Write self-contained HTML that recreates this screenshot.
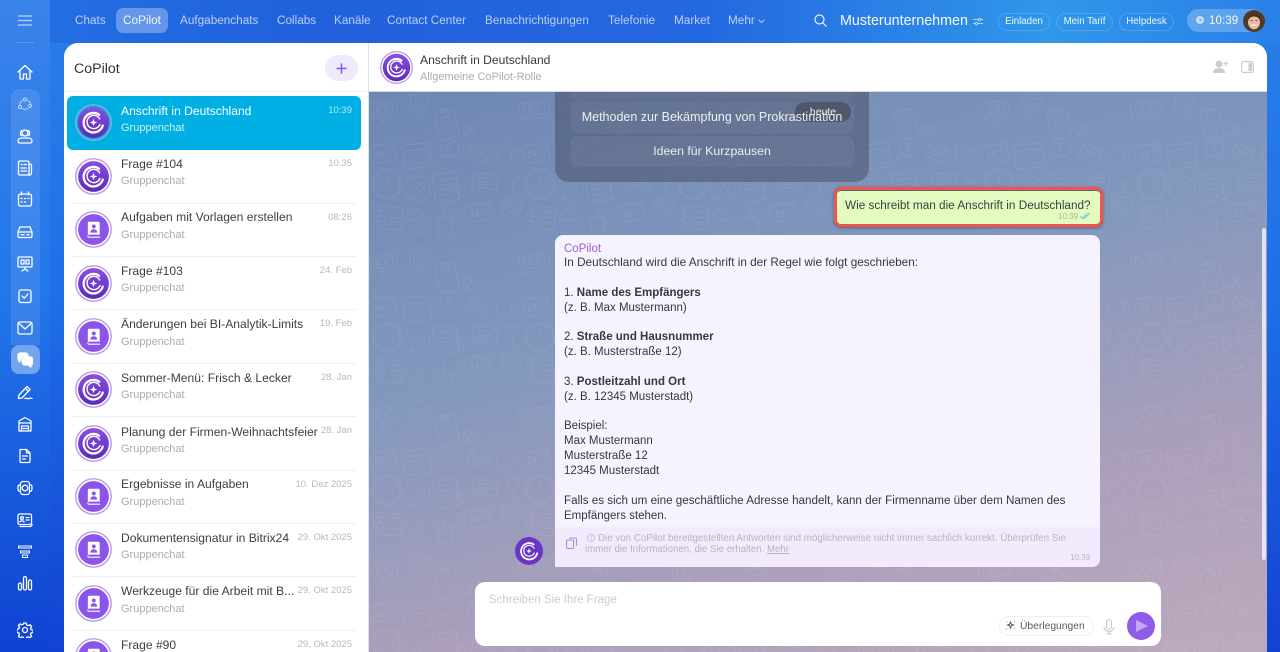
<!DOCTYPE html>
<html lang="de"><head><meta charset="utf-8"><title>CoPilot</title>
<style>
*{box-sizing:border-box;margin:0;padding:0}
html,body{width:1280px;height:652px;overflow:hidden}
body{position:relative;font-family:"Liberation Sans",sans-serif;background:linear-gradient(180deg,#2a7fe8 0%,#1f6fe8 45%,#1242d2 100%)}
.topglow{position:absolute;left:0;top:0;width:1280px;height:43px;background:linear-gradient(90deg,#2370e4 0%,#2261dc 25%,#2468e0 55%,#3097ea 82%,#2a7fe8 100%)}
.side{position:absolute;left:0;top:0;width:50px;height:652px;background:linear-gradient(180deg,#3a83ea 0%,#2277ea 45%,#0f42d2 100%)}
.t{position:absolute;white-space:nowrap}
.nav{top:14px;font-size:11.75px;line-height:14px;color:rgba(255,255,255,.68)}
.pill{position:absolute;top:13px;height:18px;border:1px solid rgba(255,255,255,.16);border-radius:9px;font-size:9.7px;line-height:16px;color:rgba(255,255,255,.92);text-align:center}
.list{position:absolute;left:64px;top:43px;width:305px;height:609px;background:#fff;border-radius:14px 0 0 0;overflow:hidden;border-right:1px solid #dfe2e8}
.hdr{position:absolute;left:369px;top:43px;width:898px;height:49px;background:#fff;border-radius:0 14px 0 0;border-bottom:1px solid #d6d9e2}
.sel{position:absolute;left:3px;top:53px;width:294px;height:54px;background:#00afe4;border-radius:6px}
.sep{position:absolute;left:7px;width:286px;height:1px;background:#eff0f3}
.ti{left:57px;font-size:12.1px;line-height:15px;color:#3b3f45}
.su{left:57px;font-size:11px;line-height:14px;color:#a9adb4}
.tm{right:16px;font-size:9.5px;line-height:12px;color:#b4b8be}
.l .tm{position:absolute}
.chat{position:absolute;left:369px;top:92px;width:898px;height:560px;background:linear-gradient(165deg,#6e87b3 0%,#8398bd 40%,#ab9fbb 72%,#bcaabc 100%);overflow:hidden}
.ln{position:absolute;left:564px;font-size:11.5px;line-height:15px;color:#35383e;white-space:nowrap}
.ln b{font-weight:700}
.av{position:absolute}
.si{position:absolute;left:17px;width:16px;height:16px;fill:none;stroke:#fff;stroke-width:1.3;stroke-linecap:round;stroke-linejoin:round}
</style></head><body>
<div class="topglow"></div>
<div class="side"></div>
<svg width="0" height="0" style="position:absolute"><defs>
<linearGradient id="cg" x1="0" y1="0" x2="0" y2="1"><stop offset="0" stop-color="#8a4fe0"/><stop offset="1" stop-color="#5d2ab8"/></linearGradient>
<symbol id="cpi" viewBox="0 0 36 36">
<circle cx="18" cy="18" r="15" fill="url(#cg)"/>
<path d="M23.500 10.500A9.500 9.500 0 1 0 27 21" fill="none" stroke="#fff" stroke-width="2.200" stroke-linecap="round"/>
<path d="M24 14.500A6.500 6.500 0 1 0 24.200 20" fill="none" stroke="#fff" stroke-width="1.400" stroke-linecap="round"/>
<path d="M18 14.300l1 2.700 2.700 1-2.700 1-1 2.700-1-2.700-2.700-1 2.700-1z" fill="#fff"/>
</symbol>
<symbol id="cp" viewBox="0 0 36 36">
<circle cx="18" cy="18" r="17.2" fill="#fff" stroke="#b79be8" stroke-width="1.4"/>
<use href="#cpi" width="36" height="36"/>
</symbol>
<symbol id="bk" viewBox="0 0 36 36">
<circle cx="18" cy="18" r="17.2" fill="#fff" stroke="#b79be8" stroke-width="1.4"/>
<circle cx="18" cy="18" r="15" fill="#8a55e8"/>
<path d="M12.500 11.500a1 1 0 0 1 1-1h9.500a1 1 0 0 1 1 1v11.500H14a1.500 1.500 0 0 0-1.500 1.200z" fill="#fff"/>
<path d="M12.500 24.500a1.200 1.200 0 0 0 1.200 1H24" fill="none" stroke="#fff" stroke-width="1.100" stroke-linecap="round"/>
<circle cx="18.300" cy="15" r="1.900" fill="#8a55e8"/><path d="M15 21c0-2.200 1.400-3.200 3.300-3.200s3.300 1 3.300 3.200z" fill="#8a55e8"/>
</symbol>
<symbol id="cal24" viewBox="-16 -12 32 24"><g fill="none" stroke="#fff" stroke-width=".6"><rect x="-13" y="-8" width="26" height="17" rx="2" transform="rotate(-8)"/><circle cx="8" cy="-4" r="3"/><path d="M-9 -9l0 2M-4 -10l0 2M1 -10l0 2"/></g><text x="-9" y="4" font-family="Liberation Sans,sans-serif" font-size="9" fill="#fff" stroke="none" transform="rotate(-8)">24</text></symbol>
<symbol id="env" viewBox="-14 -12 28 24"><g fill="none" stroke="#fff" stroke-width=".6" transform="rotate(20)"><rect x="-10" y="-7" width="20" height="14" rx="1.500"/><path d="M-10 -6l10 7 10-7M-7 -2h7M-7 2h10"/></g></symbol>
<symbol id="speech" viewBox="-16 -12 32 24"><g fill="none" stroke="#fff" stroke-width=".6" transform="rotate(8)"><path d="M-12 -8h24v14h-19l-5 4z"/><path d="M-8 -4h16M-8 0h16M-8 3h10"/></g></symbol>
<pattern id="pt" width="153" height="153" patternUnits="userSpaceOnUse" patternTransform="translate(119 0)">
<g fill="none" stroke="#fff" stroke-width=".6">
<g transform="translate(83,14) rotate(15)"><path d="M-9 -9h18l-2 20h-14zM-11 -9h22M-4 -12h8M-4 -5l1 13M0 -5v13M4 -5l-1 13"/></g>
<g transform="translate(47,21) rotate(-8)"><rect x="-15" y="-11" width="30" height="16"/><rect x="-11" y="-8" width="6" height="10"/><rect x="-3" y="-8" width="6" height="10"/><rect x="5" y="-8" width="6" height="10"/><path d="M0 5v5M-5 12l5-3 5 3"/></g>
<g transform="translate(112,32) rotate(-12)"><rect x="-10" y="-14" width="20" height="28" rx="2"/><path d="M-4 -15h8v3h-8zM-6 -7h3M0 -7h6M-6 -1h3M0 -1h6M-6 5h3M0 5h6"/></g>
<g transform="translate(134,39)"><circle r="6"/><path d="M-3 3l5-7 1 2-5 6z"/></g>
<g transform="translate(18,61)"><path d="M-9 -6h15v9a5 5 0 0 1-5 5h-5a5 5 0 0 1-5-5zM6 -3h3a2.500 2.500 0 0 1 0 6h-3M-4 -10v-3M0 -10v-3M-12 11h20"/></g>
<g transform="translate(82,64) rotate(-6)"><rect x="-14" y="-12" width="28" height="24" rx="2"/><path d="M-14 -6h28M-9 -1h3M-3 -1h3M3 -1h3M9 -1h2M-9 3h3M-3 3h3M3 3h3M9 3h2M-9 7h3M-3 7h3M3 7h3"/></g>
<g transform="translate(115,56)"><circle r="9"/><path d="M1 -5l-4 5 4 4M-7 7l-8 8"/></g>
<g transform="translate(25,88)"><circle cy="-3" r="6"/><path d="M0 3v8M-3 12h6"/></g>
<g transform="translate(52,92)"><circle r="15"/><circle r="13"/><path d="M0 -8v8h7"/></g>
<g transform="translate(82,97)"><circle r="13"/><path d="M-6 6l10-12 4 3-10 12-5 1z"/></g>
<g transform="translate(113,95) rotate(-8)"><rect x="-14" y="-14" width="24" height="28" rx="1"/><path d="M-10 -8h16M-10 -3h16M-10 2h10M-10 7h8"/><circle cx="9" cy="6" r="7"/><path d="M9 10v-7M6 5l3-3 3 3"/></g>
<g transform="translate(23,115)"><circle r="10"/><path d="M-5 -6l10 10-3 3-10-10z"/></g>
<g transform="translate(53,125) rotate(5)"><rect x="-10" y="-10" width="24" height="22" rx="1"/><circle cx="-8" cy="0" r="6"/><path d="M-8 -3v6M-11 0h6M2 -5h9M2 0h9M2 5h9"/></g>
<g transform="translate(82,129)"><path d="M-9 -1a4 4 0 0 1 2-7a5 5 0 0 1 9-1a4 4 0 0 1 2 8zM-5 3l-2 4M0 3l-2 4M4 3l-2 4M-7 12h16l2-4"/></g>
<g transform="translate(115,131)"><rect x="-12" y="-6" width="14" height="20" rx="2"/><path d="M-6 -13h18v11h-7l-4 4v-4h-7z"/><path d="M-2 -8h1M3 -8h1M8 -8h1"/></g>
</g>
<g>
<use href="#cal24" x="32" y="49" width="32" height="24"/>
<use href="#cal24" x="127" y="108" width="32" height="24"/>
<use href="#cal24" x="-26" y="108" width="32" height="24"/>
<use href="#env" x="129" y="49" width="28" height="24"/>
<use href="#env" x="-24" y="49" width="28" height="24"/>
<use href="#speech" x="134" y="78" width="32" height="24"/>
<use href="#speech" x="-19" y="78" width="32" height="24"/>
</g>
</pattern>
</defs></svg>

<!-- sidebar -->
<svg class="si" style="left:18px;top:15px;width:14px;height:11px;stroke:rgba(255,255,255,.65);stroke-width:1.200" viewBox="0 0 14 11"><path d="M0 1h14M0 5.500h14M0 10h14"/></svg>
<div style="position:absolute;left:16px;top:42px;width:18px;height:1px;background:rgba(255,255,255,.18)"></div>
<div style="position:absolute;left:11px;top:89px;width:29px;height:256px;background:rgba(255,255,255,.1);border-radius:9px 9px 0 0"></div>
<div style="position:absolute;left:11px;top:345px;width:29px;height:29px;background:rgba(255,255,255,.38);border-radius:8px"></div>
<svg class="si" style="top:64px" viewBox="0 0 16 16"><path d="M1 8l7-6.500L15 8M3 6.500V15h3.500v-5h3v5H13V6.500"/></svg>
<svg class="si" style="top:96px;stroke:rgba(255,255,255,.65);stroke-width:1" viewBox="0 0 16 16"><circle cx="8" cy="3.500" r="1.500"/><circle cx="3" cy="11" r="1.500"/><circle cx="13" cy="10" r="1.500"/><path d="M5.500 4.500A6 6 0 0 0 2.500 9M11 4.500a6 6 0 0 1 2.500 3.500M5 12.500a6 6 0 0 0 6 0"/></svg>
<svg class="si" style="top:128px" viewBox="0 0 16 16"><circle cx="8" cy="5" r="3"/><path d="M3 15a2 2 0 0 1-2-2c0-2 2-3 4-3h6c2 0 4 1 4 3a2 2 0 0 1-2 2zM4.500 7.500C3 7 3 3.500 5 2.500M11.500 7.500C13 7 13 3.500 11 2.500"/></svg>
<svg class="si" style="top:160px" viewBox="0 0 16 16"><rect x="1.500" y="1" width="10.500" height="14" rx="1.500"/><path d="M12 4h1a1.500 1.500 0 0 1 1.500 1.500V13a2 2 0 0 1-2.500 2M4 4.500h1M7 4.500h2.500M4 8h5.500M4 11h5.500"/></svg>
<svg class="si" style="top:191px" viewBox="0 0 16 16"><rect x="1.500" y="3" width="13" height="12" rx="2"/><path d="M4.500 1v3M11.500 1v3M4 7.500h1M7.500 7.500h1M11 7.500h1M4 11h1M7.500 11h1"/></svg>
<svg class="si" style="top:224px" viewBox="0 0 16 16"><path d="M3 3h10l2 5v4a1.500 1.500 0 0 1-1.500 1.500h-11A1.500 1.500 0 0 1 1 12V8zM1 8h14M4 10.700h3M10 10.700h2"/></svg>
<svg class="si" style="top:256px" viewBox="0 0 16 16"><rect x="1" y="1" width="14" height="10" rx="1"/><path d="M4 4h3v4H4zM9 4h3v4H9zM8 11v2M5 15l3-2 3 2"/></svg>
<svg class="si" style="top:288px" viewBox="0 0 16 16"><rect x="2" y="2" width="12" height="12.500" rx="2"/><path d="M5 8l2.200 2.200L11 6"/></svg>
<svg class="si" style="top:321px;height:14px" viewBox="0 0 16 14"><rect x="1" y="1" width="14" height="12" rx="2"/><path d="M1.500 2l6.500 6 6.500-6"/></svg>
<svg class="si" style="top:352px" viewBox="0 0 16 16"><path d="M1 3.500A2.500 2.500 0 0 1 3.500 1h5A2.500 2.500 0 0 1 11 3.500V4H6.500A2.500 2.500 0 0 0 4 6.500V9H3.500l-1.500 1V8.800A2.500 2.500 0 0 1 1 7z" fill="#fff"/><path d="M5.500 7a2 2 0 0 1 2-2h6a2 2 0 0 1 2 2v4a2 2 0 0 1-1.500 2v2l-3-2H7.500a2 2 0 0 1-2-2z" fill="#fff"/></svg>
<svg class="si" style="top:384px" viewBox="0 0 16 16"><path d="M2 11L10 2.500l3 3L5 14l-3.500.500zM8.500 4.500l3 3M8 14.500c2-1 3 1 4 0s2-.500 3 0"/></svg>
<svg class="si" style="top:416px" viewBox="0 0 16 16"><path d="M2 5l6-3.500L14 5v10H2zM2 7h12M4.500 10h7M4.500 10v5M11.500 10v5M4.500 12.500h7"/></svg>
<svg class="si" style="top:448px" viewBox="0 0 16 16"><path d="M3 1.500h6.500L13 5v8.500a1 1 0 0 1-1 1H4a1 1 0 0 1-1-1zM9.500 1.500V5H13M5.500 8h5M5.500 11h3"/></svg>
<svg class="si" style="top:480px" viewBox="0 0 16 16"><rect x="3.500" y="1.500" width="9" height="13" rx="2.500"/><circle cx="8" cy="8" r="2.800"/><path d="M3.500 4.500a2.500 2.500 0 0 0-2.500 2.500v2a2.500 2.500 0 0 0 2.500 2.500M12.500 4.500A2.500 2.500 0 0 1 15 7v2a2.500 2.500 0 0 1-2.500 2.500"/></svg>
<svg class="si" style="top:512px" viewBox="0 0 16 16"><rect x="1" y="2" width="13.500" height="10.500" rx="1.500"/><circle cx="5" cy="6" r="1.400"/><path d="M3 10c0-1.500 4-1.500 4 0M9 5.500h3M9 8h3M3 14.500h10a2 2 0 0 0 2-2"/></svg>
<svg class="si" style="top:544px" viewBox="0 0 16 16"><path d="M1.500 2h13v2h-13zM3.500 7h9v2h-9zM5.500 11h5v2.500h-5z" stroke-width="1"/></svg>
<svg class="si" style="top:575px" viewBox="0 0 16 16"><rect x="1.500" y="8" width="3" height="7" rx="1.500"/><rect x="6.500" y="1.500" width="3" height="13.500" rx="1.500"/><rect x="11.500" y="5" width="3" height="10" rx="1.500"/></svg>
<svg class="si" style="top:622px" viewBox="0 0 16 16"><circle cx="8" cy="8" r="2.500"/><path d="M6.800 1h2.400l.4 2 1.600.7 1.800-1 1.600 1.800-1.100 1.600.6 1.600 2 .4v2.400l-2 .4-.6 1.600 1.100 1.700-1.700 1.700-1.700-1.100-1.600.6-.4 2H6.800l-.4-2-1.600-.6-1.700 1.100-1.700-1.700 1.100-1.700-.6-1.600-2-.4V7.100l2-.4.600-1.600L1.400 3.500 3.100 1.800l1.700 1 1.600-.7z"/></svg>

<!-- top nav -->
<div style="position:absolute;left:116px;top:8px;width:52px;height:25px;background:rgba(255,255,255,.3);border-radius:7px"></div>
<span class="t nav" style="left:75px">Chats</span>
<span class="t nav" style="left:123px;color:rgba(255,255,255,.92)">CoPilot</span>
<span class="t nav" style="left:180px">Aufgabenchats</span>
<span class="t nav" style="left:277px">Collabs</span>
<span class="t nav" style="left:334px">Kanäle</span>
<span class="t nav" style="left:387px">Contact Center</span>
<span class="t nav" style="left:485px">Benachrichtigungen</span>
<span class="t nav" style="left:608px">Telefonie</span>
<span class="t nav" style="left:674px">Market</span>
<span class="t nav" style="left:728px">Mehr</span>
<svg style="position:absolute;left:758px;top:19px" width="7" height="5" viewBox="0 0 7 5"><path d="M.7.800L3.500 3.600 6.300.800" fill="none" stroke="rgba(255,255,255,.7)" stroke-width="1"/></svg>
<svg style="position:absolute;left:814px;top:14px" width="13" height="13" viewBox="0 0 13 13" fill="none" stroke="rgba(255,255,255,.9)" stroke-width="1.200"><circle cx="5.500" cy="5.500" r="4.500"/><path d="M9 9l3.500 3.500"/></svg>
<span class="t" style="left:840px;top:13px;font-size:14.3px;line-height:17px;color:rgba(255,255,255,.95)">Musterunternehmen</span>
<svg style="position:absolute;left:973px;top:17px" width="10" height="9" viewBox="0 0 10 9" fill="none" stroke="rgba(255,255,255,.6)" stroke-width="1"><path d="M0 2.500h10M0 6.500h10"/><circle cx="6.500" cy="2.500" r="1.200" fill="#3a8ee8"/><circle cx="3.500" cy="6.500" r="1.200" fill="#3a8ee8"/></svg>
<div class="pill" style="left:998px;width:52px">Einladen</div>
<div class="pill" style="left:1056px;width:57px">Mein Tarif</div>
<div class="pill" style="left:1119px;width:55px">Helpdesk</div>
<div style="position:absolute;left:1187px;top:9px;width:78px;height:23px;background:rgba(255,255,255,.24);border-radius:12px"></div>
<svg style="position:absolute;left:1196px;top:16px" width="8" height="8" viewBox="0 0 8 8"><circle cx="4" cy="4" r="4" fill="rgba(255,255,255,.65)"/><path d="M4 2v2.200h1.800" fill="none" stroke="#4f8fe6" stroke-width=".8"/></svg>
<span class="t" style="left:1209px;top:14px;font-size:11.5px;line-height:14px;letter-spacing:.1px;color:rgba(255,255,255,.92)">10:39</span>
<svg style="position:absolute;left:1243px;top:10px" width="22" height="22" viewBox="0 0 22 22"><circle cx="11" cy="11" r="11" fill="#4f3a26"/><ellipse cx="11" cy="12" rx="6" ry="7.500" fill="#e6bda2"/><path d="M5 11c0-5 2.500-7.500 6-7.500s6 2.500 6 7.500c-1-3-3-4.500-6-4.500s-5 1.500-6 4.500z" fill="#4a2e1c"/><path d="M7.500 14.500c2 2 5 2 7 0z" fill="#fff"/><path d="M7.500 10.500h2M12.500 10.500h2" stroke="#4a2e1c" stroke-width=".8"/></svg>

<!-- list -->
<div class="list l">
<span class="t" style="left:10px;top:17px;font-size:14.2px;line-height:18px;color:#333">CoPilot</span>
<div style="position:absolute;left:261px;top:12px;width:33px;height:26px;background:#f0e8fc;border-radius:13px"></div>
<svg style="position:absolute;left:272px;top:20px" width="11" height="11" viewBox="0 0 11 11"><path d="M5.500 1v9M1 5.500h9" stroke="#8a55e0" stroke-width="1.500" stroke-linecap="round"/></svg>
<div style="position:absolute;left:0;top:48px;width:304px;height:1px;background:#f1f2f4"></div>
<div class="sel"></div>
<svg class="av" style="left:11px;top:61px" width="37" height="37" viewBox="0 0 36 36"><circle cx="18" cy="18" r="17.200" fill="none" stroke="#9ba8d8" stroke-width="1.400"/><use href="#cpi" width="36" height="36"/></svg>
<span class="t ti" style="top:61px;color:#fff">Anschrift in Deutschland</span><span class="t su" style="top:78px;color:rgba(255,255,255,.82)">Gruppenchat</span><span class="t tm" style="top:62px;color:rgba(255,255,255,.72)">10:39</span>

<svg class="av" style="left:11px;top:115px" width="37" height="37"><use href="#cp" width="37" height="37"/></svg>
<span class="t ti" style="top:114px">Frage #104</span><span class="t su" style="top:131px">Gruppenchat</span><span class="t tm" style="top:115px">10:35</span>
<div class="sep" style="top:160px"></div>
<svg class="av" style="left:11px;top:168px" width="37" height="37"><use href="#bk" width="37" height="37"/></svg>
<span class="t ti" style="top:167px">Aufgaben mit Vorlagen erstellen</span><span class="t su" style="top:185px">Gruppenchat</span><span class="t tm" style="top:169px">08:26</span>
<div class="sep" style="top:213px"></div>
<svg class="av" style="left:11px;top:222px" width="37" height="37"><use href="#cp" width="37" height="37"/></svg>
<span class="t ti" style="top:221px">Frage #103</span><span class="t su" style="top:238px">Gruppenchat</span><span class="t tm" style="top:222px">24. Feb</span>
<div class="sep" style="top:266px"></div>
<svg class="av" style="left:11px;top:275px" width="37" height="37"><use href="#bk" width="37" height="37"/></svg>
<span class="t ti" style="top:274px">Änderungen bei BI-Analytik-Limits</span><span class="t su" style="top:292px">Gruppenchat</span><span class="t tm" style="top:275px">19. Feb</span>
<div class="sep" style="top:320px"></div>
<svg class="av" style="left:11px;top:328px" width="37" height="37"><use href="#cp" width="37" height="37"/></svg>
<span class="t ti" style="top:328px">Sommer-Menü: Frisch &amp; Lecker</span><span class="t su" style="top:345px">Gruppenchat</span><span class="t tm" style="top:329px">28. Jan</span>
<div class="sep" style="top:373px"></div>
<svg class="av" style="left:11px;top:382px" width="37" height="37"><use href="#cp" width="37" height="37"/></svg>
<span class="t ti" style="top:382px">Planung der Firmen-Weihnachtsfeier</span><span class="t su" style="top:399px">Gruppenchat</span><span class="t tm" style="top:382px">28. Jan</span>
<div class="sep" style="top:427px"></div>
<svg class="av" style="left:11px;top:435px" width="37" height="37"><use href="#bk" width="37" height="37"/></svg>
<span class="t ti" style="top:434px">Ergebnisse in Aufgaben</span><span class="t su" style="top:452px">Gruppenchat</span><span class="t tm" style="top:436px">10. Dez 2025</span>
<div class="sep" style="top:480px"></div>
<svg class="av" style="left:11px;top:488px" width="37" height="37"><use href="#bk" width="37" height="37"/></svg>
<span class="t ti" style="top:488px">Dokumentensignatur in Bitrix24</span><span class="t su" style="top:505px">Gruppenchat</span><span class="t tm" style="top:489px">29. Okt 2025</span>
<div class="sep" style="top:533px"></div>
<svg class="av" style="left:11px;top:542px" width="37" height="37"><use href="#bk" width="37" height="37"/></svg>
<span class="t ti" style="top:541px">Werkzeuge für die Arbeit mit B...</span><span class="t su" style="top:559px">Gruppenchat</span><span class="t tm" style="top:542px">29. Okt 2025</span>
<div class="sep" style="top:587px"></div>
<svg class="av" style="left:11px;top:595px" width="37" height="37"><use href="#bk" width="37" height="37"/></svg>
<span class="t ti" style="top:595px">Frage #90</span><span class="t tm" style="top:596px">29. Okt 2025</span>
</div>

<!-- header -->
<div class="hdr">
<svg class="av" style="left:11px;top:8px" width="33" height="33"><use href="#cp" width="33" height="33"/></svg>
<span class="t" style="left:51px;top:10px;font-size:12.1px;line-height:15px;color:#35383e">Anschrift in Deutschland</span>
<span class="t" style="left:51px;top:27px;font-size:11px;line-height:14px;color:#a9adb4">Allgemeine CoPilot-Rolle</span>
<svg style="position:absolute;left:844px;top:17px" width="16" height="14" viewBox="0 0 16 14" fill="#c9ccd1"><circle cx="6" cy="4" r="3.500"/><path d="M0 13c0-3.500 2.500-5 6-5s6 1.500 6 5z"/><path d="M13 1v5M10.500 3.500h5" stroke="#c9ccd1" stroke-width="1.200"/></svg>
<svg style="position:absolute;left:872px;top:18px" width="13" height="12" viewBox="0 0 13 12"><rect x=".6" y=".6" width="11.800" height="10.800" rx="2" fill="none" stroke="#c9ccd1" stroke-width="1.200"/><rect x="7.500" y="2" width="3.500" height="8" fill="#c9ccd1"/></svg>
</div>

<!-- chat -->
<div class="chat">
<svg width="898" height="560" style="position:absolute;left:0;top:0;opacity:.1"><rect width="898" height="560" fill="url(#pt)"/></svg>
</div>
<div style="position:absolute;left:555px;top:92px;width:314px;height:90px;background:rgba(72,82,108,.55);border-radius:0 0 14px 14px"></div>
<div style="position:absolute;left:570px;top:92px;width:284px;height:8px;background:rgba(255,255,255,.04);border-radius:0 0 6px 6px"></div>
<div style="position:absolute;left:570px;top:101px;width:284px;height:33px;background:rgba(255,255,255,.055);border-radius:7px"></div>
<div style="position:absolute;left:570px;top:136px;width:284px;height:31px;background:rgba(255,255,255,.055);border-radius:7px"></div>
<div style="position:absolute;left:795px;top:102px;width:56px;height:20px;background:rgba(72,78,92,.75);border-radius:10px"></div>
<span class="t" style="left:570px;width:284px;text-align:center;top:110px;font-size:12.5px;line-height:15px;color:rgba(255,255,255,.88)">Methoden zur Bekämpfung von Prokrastination</span>
<span class="t" style="left:570px;width:284px;text-align:center;top:144px;font-size:12.3px;line-height:15px;color:rgba(255,255,255,.88)">Ideen für Kurzpausen</span>
<span class="t" style="left:795px;width:56px;text-align:center;top:106px;font-size:10.5px;line-height:13px;color:rgba(255,255,255,.9)">heute</span>

<div style="position:absolute;left:834px;top:187px;width:269px;height:40px;border:3px solid #f0554a;border-radius:7px;background:#e4fbc0;box-shadow:0 1px 3px rgba(40,50,80,.5)"></div>
<div style="position:absolute;left:837px;top:190px;width:263px;height:34px;border-top:1px solid #5b6780;border-radius:4px"></div>
<span class="t" style="left:845px;top:198px;font-size:11.75px;line-height:15px;color:#3a3d40">Wie schreibt man die Anschrift in Deutschland?</span>
<span class="t" style="left:1058px;top:212px;font-size:8px;line-height:10px;color:#aab5a5">10:39</span>
<svg style="position:absolute;left:1080px;top:212px" width="11" height="8" viewBox="0 0 11 8" fill="none" stroke="#5fbce0" stroke-width=".9"><path d="M.5 4l2 2.500L7 1M4 6.500L10 1"/></svg>

<div style="position:absolute;left:555px;top:235px;width:545px;height:332px;background:#f6f3fe;border-radius:8px 8px 8px 0;overflow:hidden"><div style="position:absolute;left:0;top:292px;width:545px;height:40px;background:#f3eafd"></div></div>
<span class="t" style="left:564px;top:242px;font-size:11.5px;line-height:14px;color:#9b5fc8">CoPilot</span>
<div class="ln" style="top:255px;font-size:11.76px">In Deutschland wird die Anschrift in der Regel wie folgt geschrieben:</div>
<div class="ln" style="top:286px">1. <b>Name des Empfängers</b></div>
<div class="ln" style="top:301px">(z. B. Max Mustermann)</div>
<div class="ln" style="top:330px">2. <b>Straße und Hausnummer</b></div>
<div class="ln" style="top:345px">(z. B. Musterstraße 12)</div>
<div class="ln" style="top:375px">3. <b>Postleitzahl und Ort</b></div>
<div class="ln" style="top:390px">(z. B. 12345 Musterstadt)</div>
<div class="ln" style="top:419px">Beispiel:</div>
<div class="ln" style="top:434px">Max Mustermann</div>
<div class="ln" style="top:449px">Musterstraße 12</div>
<div class="ln" style="top:464px">12345 Musterstadt</div>
<div class="ln" style="top:493px;font-size:11.64px">Falls es sich um eine geschäftliche Adresse handelt, kann der Firmenname über dem Namen des</div>
<div class="ln" style="top:509px">Empfängers stehen.</div>
<svg style="position:absolute;left:566px;top:537px" width="11" height="12" viewBox="0 0 11 12" fill="none" stroke="#a78fd8" stroke-width="1.100"><rect x=".6" y="3" width="7" height="8.400" rx="1"/><path d="M3 1h6a1.500 1.500 0 0 1 1.500 1.500V9"/></svg>
<svg style="position:absolute;left:587px;top:534px" width="8" height="8" viewBox="0 0 8 8" fill="none" stroke="#bdb6cc" stroke-width=".8"><circle cx="4" cy="4" r="3.500"/><path d="M4 3.500V6M4 2v.7"/></svg>
<span class="t" style="left:598px;top:533px;font-size:9.78px;line-height:12px;color:#b8b3c6">Die von CoPilot bereitgestellten Antworten sind möglicherweise nicht immer sachlich korrekt. Überprüfen Sie</span>
<span class="t" style="left:585px;top:544px;font-size:9.67px;line-height:12px;color:#b8b3c6">immer die Informationen, die Sie erhalten. <u>Mehr</u></span>
<span class="t" style="left:1070px;top:553px;font-size:8px;line-height:10px;color:#b8b3c6">10:39</span>
<svg style="position:absolute;left:515px;top:537px" width="28" height="28" viewBox="0 0 36 36"><circle cx="18" cy="18" r="18" fill="#6b35c4"/><path d="M24 9.500A10.500 10.500 0 1 0 28.500 21" fill="none" stroke="#fff" stroke-width="2.400" stroke-linecap="round"/><path d="M24.500 14.500A7 7 0 1 0 24.700 20.500" fill="none" stroke="#fff" stroke-width="1.500" stroke-linecap="round"/><path d="M18 14.300l1 2.700 2.700 1-2.700 1-1 2.700-1-2.700-2.700-1 2.700-1z" fill="#fff"/></svg>

<div style="position:absolute;left:1262px;top:228px;width:4px;height:332px;background:rgba(240,240,246,.85);border-radius:2px"></div>

<div style="position:absolute;left:475px;top:582px;width:686px;height:64px;background:#fff;border-radius:10px"></div>
<span class="t" style="left:489px;top:593px;font-size:11.5px;line-height:14px;color:#c9ccd1">Schreiben Sie Ihre Frage</span>
<div style="position:absolute;left:999px;top:616px;width:95px;height:20px;border:1px solid #eeeff2;border-radius:10px"></div>
<svg style="position:absolute;left:1005px;top:620px" width="11" height="11" viewBox="0 0 11 11" fill="none" stroke="#5a5e66" stroke-width="1"><path d="M5.500 2l.8 2.200 2.200.8-2.200.8-.8 2.200-.8-2.200-2.200-.8 2.200-.8zM1.500 1.500l.5.500M9 8.500l.5.500M1.500 9.500l.5-.5M9 2l.5-.5"/></svg>
<span class="t" style="left:1020px;top:620px;font-size:10.3px;line-height:13px;color:#55585e">Überlegungen</span>
<svg style="position:absolute;left:1103px;top:619px" width="12" height="16" viewBox="0 0 12 16" fill="none" stroke="#c4c7cc" stroke-width="1"><rect x="3.500" y=".7" width="5" height="9.500" rx="2.500"/><path d="M1 7.500a5 5 0 0 0 10 0M6 12.500V15M3.500 15h5"/></svg>
<div style="position:absolute;left:1127px;top:612px;width:28px;height:28px;border-radius:50%;background:#8f5ce8"></div>
<svg style="position:absolute;left:1135px;top:619px" width="14" height="14" viewBox="0 0 14 14"><path d="M1 1l12 6-12 6z" fill="#c4a6f4"/></svg>
</body></html>
